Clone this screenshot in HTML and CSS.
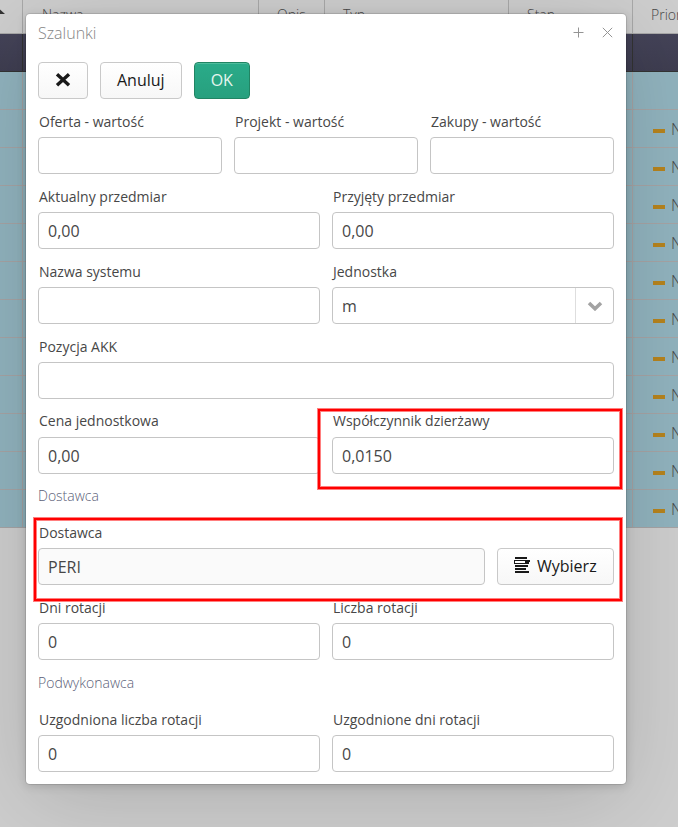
FILE: index.html
```
<!DOCTYPE html>
<html lang="pl">
<head>
<meta charset="utf-8">
<title>Szalunki</title>
<link rel="stylesheet" href="styles.css">
</head>
<body>
<div class="grid" id="grid">
  <div class="row head">
    <div class="cell sort"><svg width="5" height="5" viewBox="0 0 5 5"><path d="M-4 5L0 0.5L5 5z" fill="#333"/></svg></div>
    <div class="cell">Nazwa</div><div class="cell">Opis</div><div class="cell">Typ</div><div class="cell">Stan</div><div class="cell">Priorytet</div>
  </div>
  <div class="row selected"><div class="cell"></div><div class="cell"></div><div class="cell"></div><div class="cell"></div><div class="cell"></div><div class="cell"></div></div>
</div>

<div class="window">
  <div class="titlebar">
    <span class="title">Szalunki</span>
    <svg class="tool" width="11" height="11" viewBox="0 0 11 11"><path d="M5.5 .5v10M.5 5.5h10"/></svg>
    <svg class="tool" width="11" height="11" viewBox="0 0 11 11"><path d="M.8 .8l9.4 9.4M10.2 .8L.8 10.2"/></svg>
  </div>
  <div class="form">
    <div class="buttons">
      <button class="btn icon-only"><svg width="16" height="14" viewBox="0 0 16 14"><path d="M2 1.3L14 12.2M14 1.3L2 12.2" stroke="#191919" stroke-width="3.4"/></svg></button>
      <button class="btn">Anuluj</button>
      <button class="btn primary">OK</button>
    </div>
    <div class="fields three">
      <label class="field">Oferta - wartość<span class="input"></span></label>
      <label class="field">Projekt - wartość<span class="input"></span></label>
      <label class="field">Zakupy - wartość<span class="input"></span></label>
    </div>
    <div class="fields">
      <label class="field">Aktualny przedmiar<span class="input">0,00</span></label>
      <label class="field">Przyjęty przedmiar<span class="input">0,00</span></label>
    </div>
    <div class="fields">
      <label class="field">Nazwa systemu<span class="input"></span></label>
      <label class="field">Jednostka<span class="input select">m<span class="arrow"><svg width="16" height="10" viewBox="0 0 16 10"><path d="M2 2l6 5.7L14 2" fill="none" stroke="#a3a3a3" stroke-width="3.6"/></svg></span></span></label>
    </div>
    <div class="fields one">
      <label class="field">Pozycja AKK<span class="input"></span></label>
    </div>
    <div class="fields raised">
      <label class="field">Cena jednostkowa<span class="input">0,00</span></label>
      <label class="field marked mark-rate">Współczynnik dzierżawy<span class="input">0,0150</span></label>
    </div>
    <h2 class="section">Dostawca</h2>
    <div class="fields supplier marked mark-supplier">
      <label class="field">Dostawca<span class="input readonly">PERI</span></label>
      <button class="btn choose"><svg width="17" height="16" viewBox="0 0 17 16" shape-rendering="crispEdges"><path fill="#191919" d="M1 0h12v2H1zM0 3h16v2h-1v2H0zM1 8h13v2H1zM1 11h11v2H1zM1 14h14v2H1z"/><path fill="#fff" d="M1 4h10v2H1z"/></svg>Wybierz</button>
    </div>
    <div class="fields">
      <label class="field">Dni rotacji<span class="input">0</span></label>
      <label class="field">Liczba rotacji<span class="input">0</span></label>
    </div>
    <h2 class="section last">Podwykonawca</h2>
    <div class="fields">
      <label class="field">Uzgodniona liczba rotacji<span class="input">0</span></label>
      <label class="field">Uzgodnione dni rotacji<span class="input">0</span></label>
    </div>
  </div>
</div>
<script src="script.js"></script>
</body>
</html>
```
FILE: styles.css
```
*, *::after { box-sizing: border-box; }
body {
  margin: 0;
  width: 678px;
  height: 827px;
  position: relative;
  overflow: hidden;
  background: #cdcdcd;
  font: 16px/22px "Open Sans", sans-serif;
  color: #474747;
}
.grid { overflow: hidden; }
.row {
  display: grid;
  grid-template-columns: 23px 236px 66px 184px 124px 45px;
  height: 38px;
  background: #90b2bd;
}
.cell {
  border-right: 1px solid #a5a3a4;
  border-bottom: 1px solid #a5a3a4;
  padding: 8px 0 0 19px;
  white-space: nowrap;
  overflow: hidden;
}
.cell:last-child { border-right: 0; }
.head { height: 34px; background: #cdcdcd; font-size: 14px; font-weight: 300; }
.head .cell { border-color: #a8a8a8; padding: 4px 0 0 18px; }
.head .cell:nth-child(2) { padding-left: 19px; }
.head .sort { padding: 9px 0 0; line-height: 0; }
.selected { background: linear-gradient(#444358, #3e3d50); }
.selected .cell { border-color: #333; }
.priority { display: flex; gap: 6px; padding-left: 20px; font-weight: 300; }
.dash { flex: none; width: 12px; height: 4px; margin-top: 11px; background: #b5831d; }

.window {
  position: absolute;
  left: 26px;
  top: 14px;
  width: 600px;
  height: 770px;
  background: #fff;
  border-radius: 4px;
  box-shadow: 0 2px 10px 0 rgba(0,0,0,.16), 0 16px 80px -6px rgba(0,0,0,.16), 0 0 0 1px rgba(0,0,0,.1);
}
.titlebar {
  display: flex;
  height: 36px;
  padding: 8px 13px 0 12px;
  color: #858585;
  font-weight: 300;
}
.title { flex: 1; }
.tool { margin: 5px 0 0 18px; fill: none; stroke: #949494; }
.form { display: flex; flex-direction: column; gap: 12px; padding: 12px; }
.buttons { display: flex; gap: 12px; }
.btn {
  height: 37px;
  padding: 0 16px 1px;
  border: 1px solid #c9c9c9;
  border-radius: 4px;
  background: linear-gradient(#fff, #f7f7f7);
  font: 16px/22px "Open Sans", sans-serif;
  color: #191919;
}
.icon-only { width: 50px; padding-bottom: 2px; line-height: 0; }
.primary {
  border-color: #218463;
  background: linear-gradient(#2aab89, #27a07e);
  box-shadow: inset 0 1px 0 #4ebd9d;
  color: #e4f5ef;
}
.fields { display: grid; grid-template-columns: 1fr 1fr; gap: 12px; }
.three { grid-template-columns: 1fr 1fr 1fr; }
.one { grid-template-columns: 1fr; }
.field { display: block; font-size: 14px; height: 63px; text-indent: 1px; }
.input {
  display: flex;
  align-items: center;
  height: 37px;
  margin-top: 4px;
  padding: 1px 9px 0;
  border: 1px solid #c5c5c5;
  border-radius: 4px;
  background: #fff;
  font-size: 16px;
  text-indent: 0;
}
.raised .field { margin-top: -1px; height: 64px; }
.raised .input { margin-top: 5px; }
.select { padding: 0 0 0 9px; }
.arrow {
  display: flex;
  align-items: center;
  justify-content: center;
  width: 38px;
  height: 35px;
  margin-left: auto;
  border-left: 1px solid #dedede;
}
.readonly { background: #fafafa; }
.supplier { grid-template-columns: 1fr 117px; align-items: end; }
.choose { display: flex; align-items: center; padding: 0 0 1px 16px; }
.choose svg { margin: -2px 6px 0 0; }
.section {
  margin: 0;
  height: 24px;
  font-size: 14px;
  line-height: 20px;
  font-weight: 300;
  color: #5b6178;
}
.last { height: 25px; line-height: 22px; }
.marked { position: relative; }
.marked::after {
  content: "";
  position: absolute;
  border: 2px solid #f00;
  box-shadow: 0 0 0 1px rgba(255,0,0,.5), inset 0 0 0 1px rgba(255,0,0,.5);
  pointer-events: none;
}
.mark-rate::after { left: -14px; top: -1px; width: 304px; height: 80px; }
.mark-supplier::after { left: -4px; top: -4px; width: 588px; height: 83px; }
```
FILE: script.js
```
const grid = document.getElementById("grid");
for (let i = 0; i < 12; i++) {
  const row = document.createElement("div");
  row.className = "row";
  const last = i === 0 ? '<div class="cell"></div>' : '<div class="cell priority"><i class="dash"></i>Normalny</div>';
  row.innerHTML = '<div class="cell"></div>'.repeat(5) + last;
  grid.append(row);
}
```
